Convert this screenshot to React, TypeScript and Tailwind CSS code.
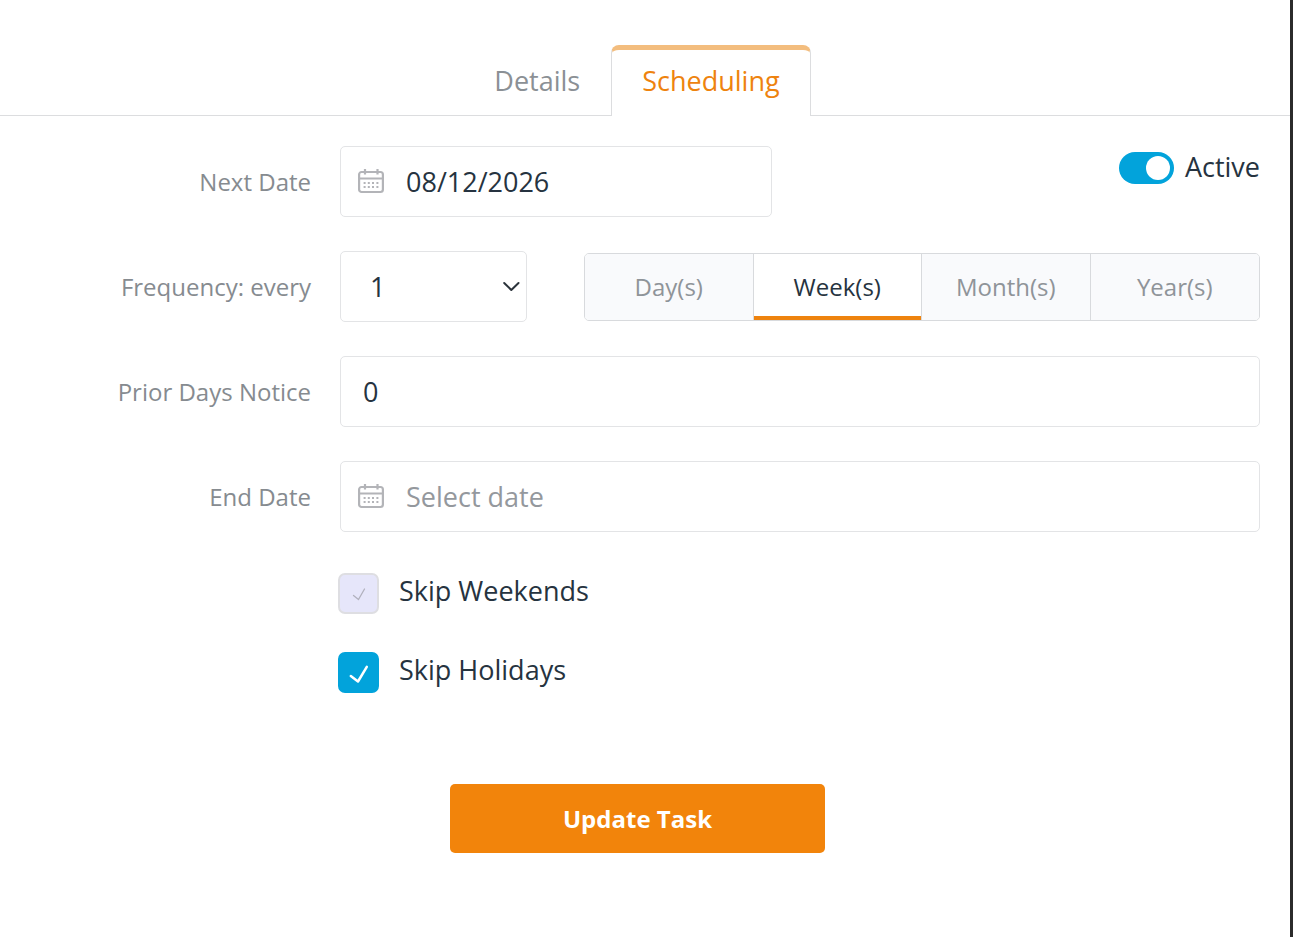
import { useState } from "react";
import type { ReactNode } from "react";

const fieldBox = "h-[71px] rounded-[5px] border border-[#e3e4e6] bg-white";

function CalendarIcon() {
  return (
    <svg width="28" height="28" viewBox="0 0 28 28" fill="none" className="shrink-0" aria-hidden="true">
      <g stroke="#b3b4b8" strokeWidth="2.200">
        <rect x="2.100" y="4" width="23.800" height="20" rx="2.500" />
        <path d="M2 10.500h24M8 1v5.500M20.500 1v5.500" />
      </g>
      <g fill="#b3b4b8">
        {[14, 18].map((y) =>
          [6.6, 10.8, 15, 19.4].map((x) => <rect key={`${x}-${y}`} x={x} y={y} width="2" height="2" />),
        )}
      </g>
    </svg>
  );
}

function Row({ id, label, children }: { id: string; label: string; children: ReactNode }) {
  return (
    <div className="grid grid-cols-[311px_1fr] items-center gap-x-[29px]">
      <label htmlFor={id} className="text-right text-2xl text-[#868b90]">
        {label}
      </label>
      {children}
    </div>
  );
}

function DateField({ id, value, className }: { id: string; value: string; className: string }) {
  return (
    <div className={`flex items-center gap-[21px] pl-4 ${fieldBox} ${className}`}>
      <CalendarIcon />
      <input
        id={id}
        type="text"
        defaultValue={value}
        placeholder="Select date"
        className="h-full min-w-0 flex-1 bg-transparent text-[27px] text-[#263340] outline-none placeholder:text-[#94989d]"
      />
    </div>
  );
}

function Check({ label, disabled }: { label: string; disabled?: boolean }) {
  return (
    <label className="flex items-start gap-5 text-[27px] leading-[41px] text-[#263340]">
      <span className="relative mt-[3px] size-[41px] shrink-0">
        <input
          type="checkbox"
          defaultChecked
          disabled={disabled}
          className="peer block size-full appearance-none rounded-[7px] border-2 border-[#dedee2] bg-white checked:border-[#02a3db] checked:bg-[#02a3db] disabled:border-[#dedee2] disabled:bg-[#e6e6fa]"
        />
        <svg
          viewBox="0 0 41 41"
          fill="none"
          strokeLinecap="round"
          strokeLinejoin="round"
          className="pointer-events-none absolute inset-0 hidden peer-checked:block"
          aria-hidden="true"
        >
          {disabled ? (
            <path d="M15.500 22.500L20.500 26.500L26.500 16" stroke="#b1b1bd" strokeWidth="1.300" />
          ) : (
            <path d="M12.800 24L20 29.500L28.800 14.800" stroke="#fff" strokeWidth="2.500" />
          )}
        </svg>
      </span>
      {label}
    </label>
  );
}

const units = ["Day(s)", "Week(s)", "Month(s)", "Year(s)"];

export default function App() {
  const [unit, setUnit] = useState("Week(s)");
  const [tab, setTab] = useState("Scheduling");

  return (
    <div className="min-h-screen border-r-[3px] border-[#2b2b2b] bg-white font-['Open_Sans','Noto_Sans',sans-serif]">
      <nav className="flex justify-center border-b border-[#dcdddf] pt-[45px] pr-4">
        {["Details", "Scheduling"].map((name) => (
          <button
            key={name}
            type="button"
            onClick={() => setTab(name)}
            className={
              tab === name
                ? "-mb-px h-[71px] rounded-t-[8px] border-x border-t-[5px] border-x-[#dcdddf] border-t-[#f3bd7e] bg-white px-[30px] pb-[3px] text-[27px] text-[#ee830e]"
                : "h-[70px] border-t-[5px] border-transparent px-[31px] pb-[2px] text-[27px] text-[#8b9095]"
            }
          >
            {name}
          </button>
        ))}
      </nav>

      <form className="flex flex-col" onSubmit={(e) => e.preventDefault()}>
        <div className="flex flex-col gap-[34px] pt-[30px] pr-[30px]">
          <Row id="next-date" label="Next Date">
            <div className="flex items-start justify-between">
              <DateField id="next-date" value="08/12/2026" className="w-[432px]" />
              <label className="flex items-center gap-[11px] text-[27px] leading-[41px] text-[#263340]">
                <input
                  type="checkbox"
                  role="switch"
                  defaultChecked
                  className="mt-[3px] flex h-8 w-[55px] appearance-none items-center rounded-full bg-[#c4c8cc] px-1 before:size-6 before:rounded-full before:bg-white checked:justify-end checked:bg-[#02a3db]"
                />
                Active
              </label>
            </div>
          </Row>

          <Row id="frequency" label="Frequency: every">
            <div className="flex items-center gap-[57px]">
              <div className="relative w-[187px] shrink-0">
                <select
                  id="frequency"
                  defaultValue="1"
                  className={`w-full appearance-none px-[29px] pt-px text-[27px] text-[#263340] ${fieldBox}`}
                >
                  {[1, 2, 3, 4, 5, 6].map((n) => (
                    <option key={n}>{n}</option>
                  ))}
                </select>
                <svg
                  width="18"
                  height="12"
                  viewBox="0 0 18 12"
                  fill="none"
                  className="pointer-events-none absolute top-[30px] right-[7px]"
                  aria-hidden="true"
                >
                  <path d="M2.200 2L9.300 9L16.500 2" stroke="#2b333b" strokeWidth="2" strokeLinecap="round" strokeLinejoin="round" />
                </svg>
              </div>
              <div
                role="group"
                aria-label="Frequency unit"
                className="grid h-[68px] flex-1 grid-cols-4 divide-x divide-[#d8dadd] overflow-hidden rounded-[5px] border border-[#d8dadd]"
              >
                {units.map((name) => (
                  <button
                    key={name}
                    type="button"
                    aria-pressed={unit === name}
                    onClick={() => setUnit(name)}
                    className={
                      unit === name
                        ? "bg-white text-2xl text-[#263340] shadow-[inset_0_-4px_0_#ee830e]"
                        : "bg-[#f9fafc] text-2xl text-[#8f9499]"
                    }
                  >
                    {name}
                  </button>
                ))}
              </div>
            </div>
          </Row>

          <Row id="notice" label="Prior Days Notice">
            <input
              id="notice"
              type="text"
              defaultValue="0"
              className={`w-full px-[22px] text-[27px] text-[#263340] outline-none ${fieldBox}`}
            />
          </Row>

          <Row id="end-date" label="End Date">
            <DateField id="end-date" value="" className="w-full" />
          </Row>
        </div>

        <div className="flex flex-col items-start gap-[35px] pt-[38px] pl-[338px]">
          <Check label="Skip Weekends" disabled />
          <Check label="Skip Holidays" />
        </div>

        <div className="flex justify-center pt-[91px] pr-[15px] pb-[84px]">
          <button
            type="submit"
            className="h-[69px] w-[375px] rounded-[5px] bg-[#f2840b] text-2xl font-bold text-white"
          >
            Update Task
          </button>
        </div>
      </form>
    </div>
  );
}
